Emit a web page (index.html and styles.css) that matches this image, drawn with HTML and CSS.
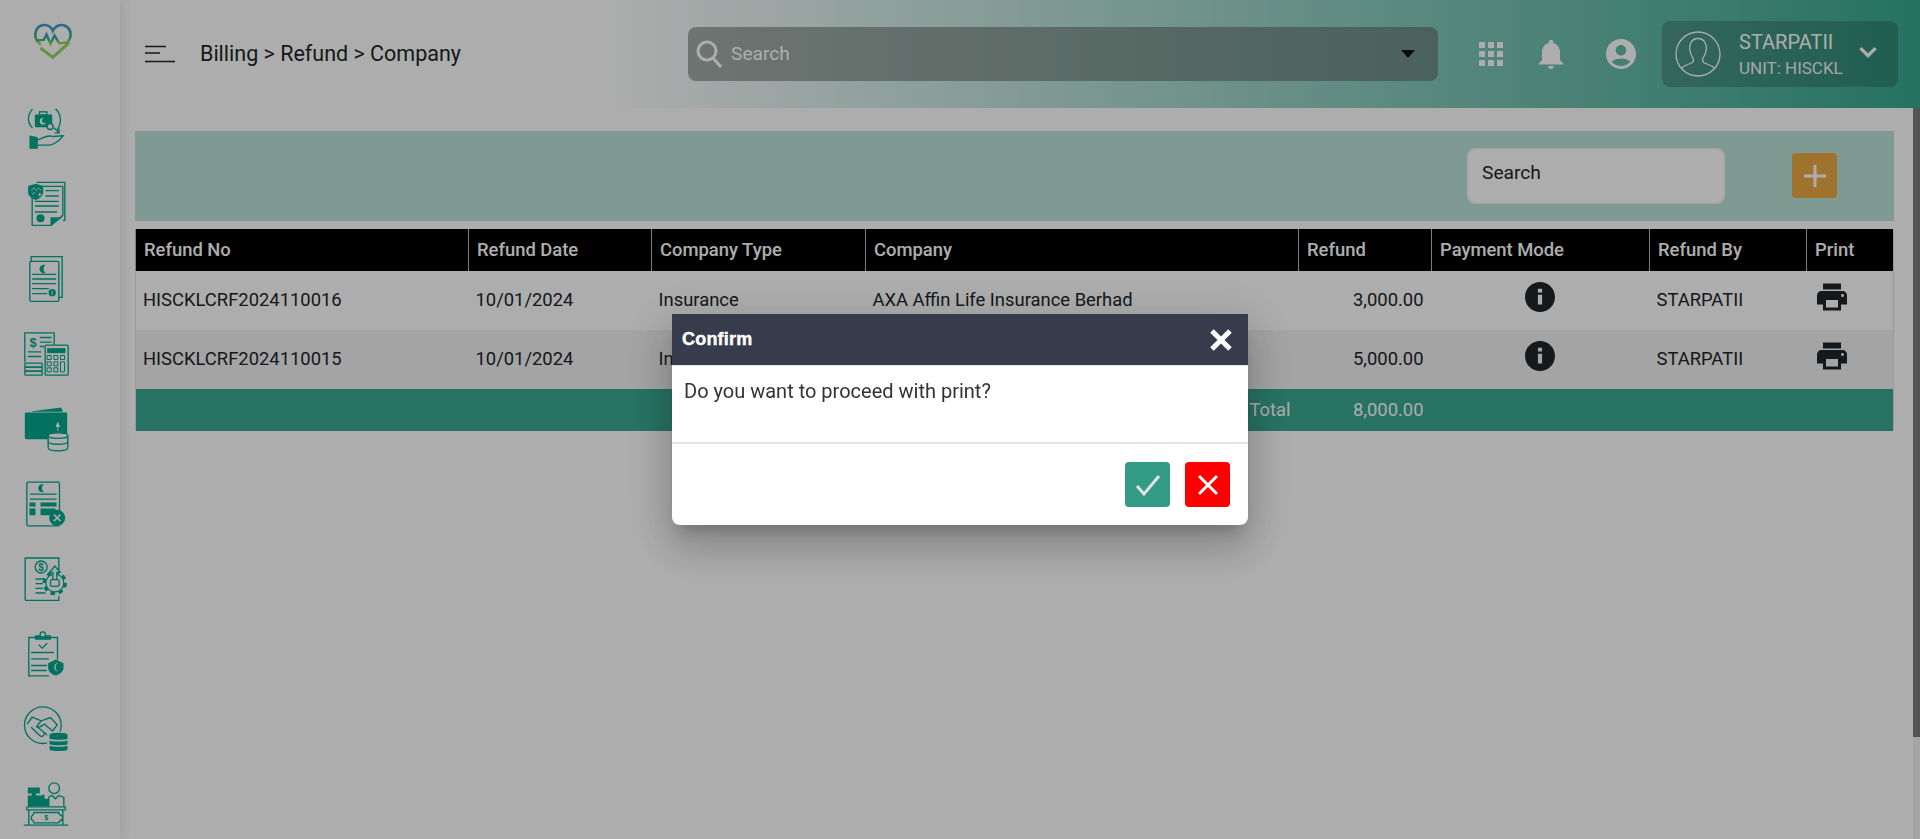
FILE: index.html
```html
<!DOCTYPE html>
<html lang="en">
<head>
    <meta charset="UTF-8">
    <meta name="viewport" content="width=device-width, initial-scale=1.0">
    <title>Billing - Refund - Company</title>
    <link rel="stylesheet" href="styles.css">
</head>
<body>
    <aside class="sidebar">
        <svg class="logo" viewBox="88.5 54 138 138">
            <defs>
                <linearGradient id="logo-grad" x1="0" y1="0" x2="0" y2="1">
                    <stop offset="0" stop-color="#3c9fd0"/>
                    <stop offset="0.55" stop-color="#37b08f"/>
                    <stop offset="1" stop-color="#a6dc55"/>
                </linearGradient>
            </defs>
            <path d="M118 132C96 112 102 78 130 75C145 74 153 84 157 92C163 80 176 72 190 76C212 84 216 106 203 124" fill="none" stroke="url(#logo-grad)" stroke-width="8" stroke-linecap="round"/>
            <path d="M106 122L130 120L138 103L150 132L162 106L176 130L206 127" fill="none" stroke="url(#logo-grad)" stroke-width="7"/>
            <path d="M120 144L157 172L206 128" fill="none" stroke="#9bd65a" stroke-width="9"/>
        </svg>

        <nav class="side-nav">
            <!-- insurance refund -->
            <svg class="side-icon" viewBox="67.5 316.5 138 138">
                <path class="ln" d="M96 325C80 345 80 365 96 383M165 325C185 345 183 370 170 388"/>
                <rect class="fl" x="103" y="342" width="52" height="38" rx="3"/>
                <rect class="ln" x="117" y="334" width="22" height="10"/>
                <circle class="hole" cx="128" cy="362" r="10"/>
                <circle class="fl" cx="133" cy="360" r="8"/>
                <circle class="hole-ln" cx="149" cy="378" r="9"/>
                <path class="ln" d="M160 382L176 397M176 385V397H163"/>
                <path class="fl" d="M87 405L112 410V445H87Z"/>
                <path class="ln" d="M112 418C130 412 140 402 156 408L188 406C178 420 160 432 146 434H112"/>
            </svg>
            <!-- policy document -->
            <svg class="side-icon" viewBox="67.5 537 138 138">
                <path class="ln" d="M108 541H193V655H187"/>
                <path class="ln" d="M95 585V670H152L187 640V553H125"/>
                <path class="fl" d="M150 670V646H186Z"/>
                <path class="ln" d="M135 566H175M135 582H175M103 598H175M103 612H175M103 630H170"/>
                <circle class="fl" cx="120" cy="649" r="12"/>
                <path class="fl" d="M83 552L106 545L128 552V572C126 585 115 590 106 594C96 590 84 585 83 572Z"/>
                <path class="thin" d="M92 565L100 558L107 565L114 558L122 565M94 578L104 570M112 578H124M118 572V584"/>
            </svg>
            <!-- takaful invoice -->
            <svg class="side-icon" viewBox="22.5 41 138 138">
                <path class="ln" d="M47 56V43H140V165H130"/>
                <rect class="ln" x="43" y="57" width="87" height="120" rx="3"/>
                <path class="moon" d="M90 68A13 13 0 1 0 90 92A15 15 0 0 1 90 68Z"/>
                <path class="ln" d="M50 96H122M50 110H122M50 124H122M50 139H100M50 154H95"/>
                <circle class="fl" cx="110" cy="151" r="11"/>
                <path class="thin" d="M110 145V157"/>
            </svg>
            <!-- statement and calculator -->
            <svg class="side-icon" viewBox="67.5 145.5 138 138">
                <path class="ln" d="M73 240V151H161V187"/>
                <text class="icon-text" x="87" y="194">$</text>
                <path class="ln" d="M118 165H153M118 179H153M118 192H132M82 208H122M82 222H122"/>
                <rect class="ln" x="73" y="242" width="52" height="12" rx="3"/>
                <rect class="ln" x="73" y="254" width="52" height="12" rx="3"/>
                <rect class="ln" x="73" y="266" width="52" height="12" rx="3"/>
                <rect class="hole-ln" x="134" y="188" width="69" height="90" rx="3"/>
                <rect class="fl" x="140" y="197" width="55" height="15"/>
                <path class="grid" d="M140 219h12v12h-12zM160 219h12v12h-12zM180 219h12v12h-12zM140 238h12v12h-12zM160 238h12v12h-12zM140 256h12v12h-12zM160 256h12v12h-12zM180 238h12v30h-12z"/>
            </svg>
            <!-- wallet -->
            <svg class="side-icon" viewBox="67.5 370.5 138 138">
                <path class="fl" d="M95 386L182 375L187 388H95Z"/>
                <rect class="fl" x="73" y="390" width="127" height="80" rx="4"/>
                <path class="arrow" d="M172 445V424M167 432L172 420L177 432Z"/>
                <path class="hole-ln" d="M143 460C143 448 202 448 202 460V495C202 508 143 508 143 495Z"/>
                <path class="ln" d="M143 460C143 470 202 470 202 460M143 477C143 488 202 488 202 477"/>
            </svg>
            <!-- cancelled bill -->
            <svg class="side-icon" viewBox="67.5 595.5 138 138">
                <rect class="ln" x="79" y="599" width="98" height="131" rx="4"/>
                <path class="moon" d="M130 606A12 12 0 1 0 130 628A13 13 0 0 1 130 606Z"/>
                <path class="ln" d="M88 635H168M88 650H168"/>
                <path class="fl" d="M87 660H105V672H87ZM87 678H105V698H87ZM120 660H168V672H120ZM120 678H165V698H120Z"/>
                <circle class="fl" cx="170" cy="706" r="24"/>
                <path class="cross" d="M160 696L180 716M180 696L160 716"/>
            </svg>
            <!-- settlement settings -->
            <svg class="side-icon" viewBox="22.5 39 138 138">
                <path class="ln" d="M29 172V45H130V85M29 172H130V160"/>
                <circle class="ln" cx="77" cy="72" r="18"/>
                <text class="icon-text small" x="68" y="83">$</text>
                <path class="ln" d="M60 108H88M60 122H82M60 136H82M60 150H90"/>
                <circle class="hole-ln" cx="118" cy="120" r="27"/>
                <circle class="gear" cx="118" cy="120" r="32"/>
                <rect class="ln" x="105" y="110" width="26" height="20" rx="5"/>
                <path class="hole-ln" d="M112 108V88H102L118 69L134 88H124V108"/>
            </svg>
            <!-- clipboard -->
            <svg class="side-icon" viewBox="67.5 208.5 138 138">
                <path class="ln" d="M103 228H85V343H145M152 228H171V295"/>
                <rect class="fl" x="103" y="221" width="49" height="14" rx="3"/>
                <circle class="hole-ln" cx="127" cy="219" r="8"/>
                <path class="ln" d="M115 250L125 260L140 245"/>
                <path class="ln" d="M92 273H160M92 292H145M92 312H140M92 327H138"/>
                <path class="fl" d="M143 305L166 294L189 305V320C187 332 176 338 166 342C154 338 145 332 143 320Z"/>
                <path class="hole" d="M174 304A12 12 0 1 0 174 330A14 14 0 0 1 174 304Z"/>
            </svg>
            <!-- handshake -->
            <svg class="side-icon" viewBox="67.5 433.5 138 138">
                <circle class="ln" cx="127" cy="491" r="55"/>
                <path class="ln" d="M80 488L95 467L122 478L150 468L170 490L155 510"/>
                <path class="ln" d="M122 478L108 495C115 502 126 490 132 488L158 510"/>
                <path class="ln" d="M92 497L120 524C128 528 134 518 130 512M108 494L142 522M100 505L112 517"/>
                <rect class="hole" x="140" y="510" width="66" height="62"/>
                <path class="fl" d="M147 520C147 512 201 512 201 520V532C201 536 147 536 147 532ZM147 537C155 541 193 541 201 537V548C201 552 147 552 147 548ZM147 553C155 557 193 557 201 553V564C201 570 147 570 147 564Z"/>
            </svg>
            <!-- cashier -->
            <svg class="side-icon" viewBox="67.5 658.5 138 138">
                <circle class="ln" cx="161" cy="680" r="16"/>
                <path class="ln" d="M145 735V706L155 702L165 712L175 702L190 708V735"/>
                <path class="fl" d="M82 678H118V696H106V702H125V700H132V712H145V735H82V702H94V696H82Z"/>
                <rect class="ln" x="79" y="736" width="116" height="9" rx="2"/>
                <path class="ln" d="M85 745V790M187 745V790M70 791H203"/>
                <path class="ln" d="M100 753H175C175 760 180 762 186 764V774C180 776 175 778 175 784H100C100 778 95 776 93 774V764C95 762 100 760 100 753Z"/>
                <text class="icon-text tiny" x="131" y="776">$</text>
            </svg>
        </nav>
    </aside>

    <div class="page">
        <header class="topbar">
            <svg class="menu-icon" viewBox="0 0 30 20">
                <path d="M0 1.5H21M0 8H15M0 16.5H30"/>
            </svg>
            <div class="crumbs">Billing &gt; Refund &gt; Company</div>

            <div class="top-search">
                <svg class="search-icon" viewBox="0 0 27 28">
                    <circle cx="11" cy="11" r="9"/>
                    <path d="M17 18L25 27"/>
                </svg>
                <span class="top-search-text">Search</span>
                <span class="caret"></span>
            </div>

            <div class="top-icons">
                <svg class="top-icon" viewBox="0 0 24 24"><path d="M4 8h4V4H4v4zm6 12h4v-4h-4v4zm-6 0h4v-4H4v4zm0-6h4v-4H4v4zm6 0h4v-4h-4v4zm6-10v4h4V4h-4zm-6 4h4V4h-4v4zm6 6h4v-4h-4v4zm0 6h4v-4h-4v4z"/></svg>
                <svg class="top-icon" viewBox="0 0 24 24"><path d="M12 22c1.1 0 2-.9 2-2h-4c0 1.1.89 2 2 2zm6-6v-5c0-3.07-1.64-5.64-4.5-6.32V4c0-.83-.67-1.5-1.5-1.5s-1.5.67-1.5 1.5v.68C7.63 5.36 6 7.92 6 11v5l-2 2v1h16v-1l-2-2z"/></svg>
                <svg class="top-icon account" viewBox="0 0 24 24"><path d="M12 2C6.48 2 2 6.48 2 12s4.48 10 10 10 10-4.48 10-10S17.52 2 12 2zm0 4c1.93 0 3.5 1.57 3.5 3.5S13.93 13 12 13s-3.5-1.57-3.5-3.5S10.07 6 12 6zm0 14c-2.03 0-4.43-.82-6.14-2.88C7.55 15.8 9.68 15 12 15s4.45.8 6.14 2.12C16.43 19.18 14.03 20 12 20z"/></svg>
            </div>

            <div class="user-chip">
                <svg class="avatar" viewBox="0 0 46 46">
                    <circle cx="23" cy="23" r="22"/>
                    <path d="M6 37.5C9 34 14 33.500 17.500 31.500C19 30 18.500 27.500 16.500 24.500C14.500 20 14 16 15.500 12.500C17 9 20 7.500 23 7.500C26 7.500 29 9 30.500 12.500C32 16 31.500 20 29.500 24.500C27.500 27.500 27 30 28.500 31.500C32 33.500 37 34 40 37.500"/>
                </svg>
                <div class="user-text">
                    <div class="user-name">STARPATII</div>
                    <div class="user-unit">UNIT: HISCKL</div>
                </div>
                <svg class="chevron" viewBox="0 0 18 12">
                    <path d="M2 2L9 9L16 2"/>
                </svg>
            </div>
        </header>

        <div class="content-row">
            <main class="content">
                <div class="toolbar">
                    <input class="table-search" type="text" placeholder="Search">
                    <button class="add-btn" type="button">
                        <svg viewBox="0 0 22 22"><path d="M11 0V22M0 11H22"/></svg>
                    </button>
                </div>

                <table class="refunds">
                    <colgroup>
                        <col class="c-no">
                        <col class="c-date">
                        <col class="c-type">
                        <col class="c-company">
                        <col class="c-refund">
                        <col class="c-mode">
                        <col class="c-by">
                        <col class="c-print">
                    </colgroup>
                    <thead>
                        <tr>
                            <th>Refund No</th>
                            <th>Refund Date</th>
                            <th>Company Type</th>
                            <th>Company</th>
                            <th>Refund</th>
                            <th>Payment Mode</th>
                            <th>Refund By</th>
                            <th>Print</th>
                        </tr>
                    </thead>
                    <tbody>
                        <tr>
                            <td>HISCKLCRF2024110016</td>
                            <td>10/01/2024</td>
                            <td>Insurance</td>
                            <td>AXA Affin Life Insurance Berhad</td>
                            <td class="num">3,000.00</td>
                            <td><svg class="cell-icon center" viewBox="0 0 24 24"><path d="M12 2C6.48 2 2 6.48 2 12s4.480 10 10 10 10-4.480 10-10S17.520 2 12 2zm1.400 15h-2.800v-6.500h2.800V17zm0-8h-2.800V6.500h2.800V9z"/></svg></td>
                            <td>STARPATII</td>
                            <td><svg class="cell-icon" viewBox="0 0 24 24"><path d="M19 8H5c-1.660 0-3 1.340-3 3v6h4v4h12v-4h4v-6c0-1.660-1.340-3-3-3zm-3 11H8v-5h8v5zm3-7c-.55 0-1-.45-1-1s.45-1 1-1 1 .45 1 1-.45 1-1 1zm-1-9H6v4h12V3z"/></svg></td>
                        </tr>
                        <tr class="alt">
                            <td>HISCKLCRF2024110015</td>
                            <td>10/01/2024</td>
                            <td>Insurance</td>
                            <td></td>
                            <td class="num">5,000.00</td>
                            <td><svg class="cell-icon center" viewBox="0 0 24 24"><path d="M12 2C6.48 2 2 6.48 2 12s4.480 10 10 10 10-4.480 10-10S17.520 2 12 2zm1.400 15h-2.800v-6.500h2.800V17zm0-8h-2.800V6.500h2.800V9z"/></svg></td>
                            <td>STARPATII</td>
                            <td><svg class="cell-icon" viewBox="0 0 24 24"><path d="M19 8H5c-1.660 0-3 1.340-3 3v6h4v4h12v-4h4v-6c0-1.660-1.340-3-3-3zm-3 11H8v-5h8v5zm3-7c-.55 0-1-.45-1-1s.45-1 1-1 1 .45 1 1-.45 1-1 1zm-1-9H6v4h12V3z"/></svg></td>
                        </tr>
                    </tbody>
                    <tfoot>
                        <tr>
                            <td colspan="4" class="num">Total</td>
                            <td class="num">8,000.00</td>
                            <td colspan="3"></td>
                        </tr>
                    </tfoot>
                </table>
            </main>
            <div class="scroll-track"><div class="scroll-thumb"></div></div>
        </div>
    </div>

    <div class="backdrop">
        <div class="modal">
            <div class="modal-head">
                <span class="modal-title">Confirm</span>
                <svg class="modal-close" viewBox="0 0 24 24"><path d="M3 3L21 21M21 3L3 21"/></svg>
            </div>
            <div class="modal-body">Do you want to proceed with print?</div>
            <div class="modal-foot">
                <button class="modal-btn yes" type="button">
                    <svg viewBox="0 0 28 24"><path d="M3 13L10 21L25 3"/></svg>
                </button>
                <button class="modal-btn no" type="button">
                    <svg viewBox="0 0 24 24"><path d="M3 3L21 21M21 3L3 21"/></svg>
                </button>
            </div>
        </div>
    </div>
</body>
</html>
```

FILE: styles.css
```css
* {
    box-sizing: border-box;
}
html, body {
    height: 100%;
}
body {
    display: flex;
    margin: 0;
    overflow: hidden;
    font-family: Roboto, "Liberation Sans", sans-serif;
    font-size: 18px;
    color: #212529;
    background: #fff;
}

/* sidebar */
.sidebar {
    position: relative;
    z-index: 2;
    flex: 0 0 120px;
    background: #fff;
    box-shadow: 0 0 12px rgba(0, 0, 0, 0.12);
}
.logo {
    display: block;
    width: 46px;
    height: 46px;
    margin: 18px 0 0 29.5px;
}
.side-nav {
    display: flex;
    flex-direction: column;
    padding: 41.5px 0 0 22.5px;
}
.side-icon {
    display: block;
    width: 46px;
    height: 46px;
    margin-bottom: 29px;
    overflow: visible;
}
.side-icon .ln, .side-icon .thin {
    fill: none;
    stroke: #00a88c;
    stroke-width: 4;
}
.side-icon .thin {
    stroke: #fff;
    stroke-width: 2.5;
}
.side-icon .fl, .side-icon .moon {
    fill: #00a88c;
}
.side-icon .hole {
    fill: #fff;
}
.side-icon .hole-ln {
    fill: #fff;
    stroke: #00a88c;
    stroke-width: 4;
}
.side-icon .grid {
    fill: none;
    stroke: #00a88c;
    stroke-width: 3;
}
.side-icon .arrow {
    fill: #fff;
    stroke: #fff;
    stroke-width: 3;
}
.side-icon .cross {
    fill: none;
    stroke: #fff;
    stroke-width: 5;
}
.side-icon .gear {
    fill: none;
    stroke: #00a88c;
    stroke-width: 9;
    stroke-dasharray: 13 12;
}
.icon-text {
    font-family: "Liberation Sans", sans-serif;
    font-size: 38px;
    font-weight: 700;
    fill: #00a88c;
}
.icon-text.small {
    font-size: 30px;
}
.icon-text.tiny {
    font-size: 22px;
}

/* top bar */
.page {
    flex: 1;
    display: flex;
    flex-direction: column;
    min-width: 0;
}
.topbar {
    flex: 0 0 108px;
    display: flex;
    align-items: center;
    padding-left: 25px;
    background: linear-gradient(to right, #fff 27%, #38a990 100%);
}
.menu-icon {
    flex: 0 0 30px;
    height: 20px;
    margin: 2px 25px 0 0;
    fill: none;
    stroke: #212529;
    stroke-width: 1.4;
}
.crumbs {
    flex: 0 0 488px;
    font-size: 21.5px;
    line-height: 24px;
}
.top-search {
    flex: 0 0 750px;
    display: flex;
    align-items: center;
    height: 54px;
    padding: 0 23px 0 8px;
    border-radius: 8px;
    background: linear-gradient(to right, #a2aca8, #6d9087);
}
.search-icon {
    width: 27px;
    height: 28px;
    fill: none;
    stroke: #fff;
    stroke-width: 3;
}
.top-search-text {
    flex: 1;
    margin: 0 0 2px 8px;
    font-size: 19.2px;
    color: #fff;
}
.caret {
    width: 0;
    height: 0;
    border-left: 7.5px solid transparent;
    border-right: 7.5px solid transparent;
    border-top: 8px solid #111;
}
.top-icons {
    display: flex;
    align-items: center;
    gap: 24px;
    margin-left: 35px;
}
.top-icon {
    display: block;
    width: 36px;
    height: 36px;
    fill: #fff;
}
.top-icon.account {
    margin-left: 10px;
}
.user-chip {
    flex: 0 0 236px;
    display: flex;
    align-items: center;
    height: 66px;
    margin-left: 23px;
    padding-left: 13px;
    border-radius: 8px;
    background: rgba(0, 0, 0, 0.18);
    color: #fff;
}
.avatar {
    flex: 0 0 46px;
    height: 46px;
    fill: none;
    stroke: #fff;
    stroke-width: 1.3;
}
.user-text {
    flex: 1;
    margin-left: 18px;
}
.user-name {
    font-size: 20px;
    line-height: 24px;
}
.user-unit {
    margin-top: 4px;
    font-size: 17px;
    line-height: 20px;
    opacity: 0.92;
}
.chevron {
    width: 20px;
    height: 13px;
    margin: -4px 20px 0 0;
    fill: none;
    stroke: #fff;
    stroke-width: 3;
}

/* content */
.content-row {
    flex: 1;
    display: flex;
    min-height: 0;
}
.content {
    flex: 1;
    min-width: 0;
    padding: 23px 19px 0 15px;
}
.scroll-track {
    flex: 0 0 7px;
    background: #f4f4f4;
}
.scroll-thumb {
    height: 629px;
    background: #7e7e7e;
}
.toolbar {
    display: flex;
    align-items: center;
    justify-content: flex-end;
    gap: 67px;
    height: 90px;
    padding: 0 57px 1px 0;
    background: #bbe4d7;
}
.table-search {
    width: 258px;
    height: 56px;
    padding: 0 14px 7px;
    border: 1px solid #f2f2f2;
    border-radius: 9px;
    background: #fff;
    font-family: inherit;
    font-size: 19.2px;
    outline: none;
}
.table-search::placeholder {
    color: #212529;
    opacity: 1;
}
.add-btn {
    display: flex;
    align-items: center;
    justify-content: center;
    width: 45px;
    height: 45px;
    padding: 0;
    border: 0;
    border-radius: 4px;
    background: #eba845;
}
.add-btn svg {
    width: 22px;
    height: 22px;
    fill: none;
    stroke: #fff;
    stroke-width: 3;
}

/* table */
.refunds {
    width: 1758px;
    margin: 8px 0 0;
    border-collapse: collapse;
    table-layout: fixed;
    font-size: 18.4px;
    border-left: 1px solid #e4e4e4;
    border-right: 1px solid #e4e4e4;
}
.c-no { width: 333px; }
.c-date { width: 183px; }
.c-type { width: 214px; }
.c-company { width: 433px; }
.c-refund { width: 133px; }
.c-mode { width: 218px; }
.c-by { width: 157px; }
.c-print { width: 87px; }
.refunds th {
    height: 42px;
    padding: 0 8px 2px;
    border-left: 1px solid #bbb;
    background: #000;
    color: #fff;
    font-weight: 500;
    text-align: left;
}
.refunds tbody td {
    height: 59px;
    padding: 0 8px 2px 7px;
}
.refunds .alt td {
    background: #f2f2f2;
}
.refunds .num {
    text-align: right;
}
.refunds tfoot td {
    height: 42px;
    padding: 0 8px 2px;
    background: #3aa993;
    color: #fff;
}
.cell-icon {
    display: block;
    width: 36px;
    height: 36px;
    margin-bottom: 6px;
    fill: #212529;
}
.cell-icon.center {
    margin-left: auto;
    margin-right: auto;
}

/* confirm dialog */
.backdrop {
    position: fixed;
    inset: 0;
    z-index: 10;
    display: flex;
    align-items: center;
    justify-content: center;
    background: rgba(0, 0, 0, 0.32);
}
.modal {
    width: 576px;
    border-radius: 0 0 8px 8px;
    background: #fff;
    box-shadow: 0 11px 15px -7px rgba(0, 0, 0, 0.2), 0 24px 38px 3px rgba(0, 0, 0, 0.14), 0 9px 46px 8px rgba(0, 0, 0, 0.12);
}
.modal-head {
    display: flex;
    align-items: center;
    justify-content: space-between;
    height: 52px;
    padding: 0 15px 0 10px;
    border-bottom: 1px solid #dee2e6;
    background: #363c4b;
}
.modal-title {
    font-family: "Liberation Sans", sans-serif;
    font-size: 18px;
    font-weight: 700;
    letter-spacing: 0.2px;
    color: #fff;
    -webkit-text-stroke: 0.4px #fff;
}
.modal-close {
    width: 24px;
    height: 24px;
    fill: none;
    stroke: #fff;
    stroke-width: 5;
}
.modal-body {
    height: 78px;
    padding: 12px 12px 0;
    border-bottom: 2px solid #e6e6e6;
    font-size: 20px;
    line-height: 27px;
    color: #333;
}
.modal-foot {
    display: flex;
    justify-content: flex-end;
    gap: 15px;
    height: 81px;
    padding: 18px 18px 0 0;
}
.modal-btn {
    display: flex;
    align-items: center;
    justify-content: center;
    width: 45px;
    height: 45px;
    padding: 0;
    border: 0;
    border-radius: 4px;
}
.modal-btn svg {
    fill: none;
}
.modal-btn.yes {
    background: #339a85;
}
.modal-btn.yes svg {
    width: 28px;
    height: 24px;
    stroke: #dfe5e0;
    stroke-width: 3;
}
.modal-btn.no {
    background: #f00;
}
.modal-btn.no svg {
    width: 24px;
    height: 24px;
    stroke: #fff;
    stroke-width: 3;
}
```
